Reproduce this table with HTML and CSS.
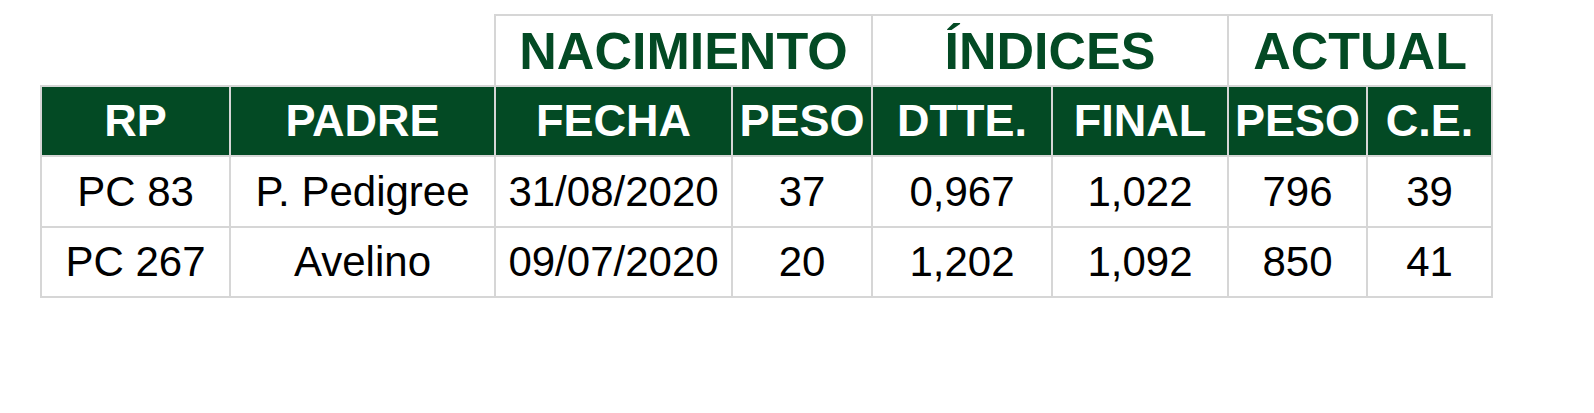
FILE: index.html
```html
<!DOCTYPE html>
<html lang="es">
<head>
<meta charset="utf-8">
<title>Tabla</title>
<link rel="stylesheet" href="styles.css">
</head>
<body>
<table class="tabla">
  <colgroup>
    <col class="c-rp"><col class="c-padre"><col class="c-fecha"><col class="c-peso"><col class="c-dtte"><col class="c-final"><col class="c-apeso"><col class="c-ce">
  </colgroup>
  <thead>
    <tr class="grupo">
      <th class="vacio" colspan="2"></th>
      <th colspan="2">NACIMIENTO</th>
      <th colspan="2">ÍNDICES</th>
      <th colspan="2">ACTUAL</th>
    </tr>
    <tr class="cab">
      <th>RP</th>
      <th>PADRE</th>
      <th>FECHA</th>
      <th>PESO</th>
      <th>DTTE.</th>
      <th>FINAL</th>
      <th>PESO</th>
      <th>C.E.</th>
    </tr>
  </thead>
  <tbody>
    <tr class="fila1">
      <td>PC 83</td>
      <td>P. Pedigree</td>
      <td>31/08/2020</td>
      <td>37</td>
      <td>0,967</td>
      <td>1,022</td>
      <td>796</td>
      <td>39</td>
    </tr>
    <tr class="fila2">
      <td>PC 267</td>
      <td>Avelino</td>
      <td>09/07/2020</td>
      <td>20</td>
      <td>1,202</td>
      <td>1,092</td>
      <td>850</td>
      <td>41</td>
    </tr>
  </tbody>
</table>
</body>
</html>
```

FILE: styles.css
```css
html, body {
  margin: 0;
  padding: 0;
  background: #ffffff;
}

body {
  padding: 14px 0 0 40px;
  font-family: "Liberation Sans", Arial, Helvetica, sans-serif;
}

.tabla {
  border-collapse: collapse;
  table-layout: fixed;
  width: 1451px;
}

.c-rp { width: 189px; }
.c-padre { width: 265px; }
.c-fecha { width: 237px; }
.c-peso { width: 140px; }
.c-dtte { width: 180px; }
.c-final { width: 176px; }
.c-apeso { width: 139px; }
.c-ce { width: 125px; }

.tabla th,
.tabla td {
  border: 2px solid #d6d6d6;
  padding: 0;
  text-align: center;
  vertical-align: middle;
  white-space: nowrap;
  overflow: hidden;
}

.tabla th.vacio {
  border: none;
}

.grupo {
  height: 71px;
}

.grupo th {
  color: #034a24;
  font-size: 52px;
  font-weight: bold;
  background: #ffffff;
}

.cab {
  height: 70px;
}

.cab th {
  background: #034a24;
  color: #ffffff;
  font-size: 45px;
  font-weight: bold;
}

.fila1 {
  height: 71px;
}

.fila2 {
  height: 70px;
}

.tabla td {
  color: #000000;
  font-size: 42px;
  font-weight: normal;
}
```
